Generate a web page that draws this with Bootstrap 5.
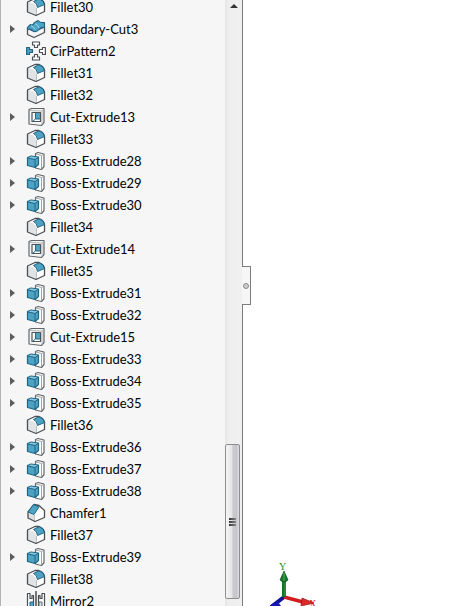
<!DOCTYPE html>
<html lang="en">
<head>
<meta charset="utf-8">
<meta name="viewport" content="width=device-width, initial-scale=1">
<title>Feature tree</title>
<link rel="stylesheet" href="https://cdn.jsdelivr.net/npm/bootstrap@5.3.0/dist/css/bootstrap.min.css">
<style>
body { font: 13px/22px Lato, "Noto Sans", sans-serif; color: #000; }
.feature-panel { flex: 0 0 243px; background: #f6f6f6; border-left: 1px solid #b4b4b4; border-right: 1px solid #7c7c7c; }
.feature-tree { margin-top: -4px; }
.feature { height: 22px; padding-left: 25px; gap: 4px; white-space: nowrap; }
.feature.has-children { padding-left: 0; }
.feature svg { width: 20px; height: 20px; flex: none; stroke-linejoin: round; }
.toggle { width: 21px; height: 22px; }
.toggle::before { content: ""; display: block; margin-left: 9px; width: 0; border: 4px solid transparent; border-left: 5px solid #5d5d5d; border-right: 0; }
.scroll-track { flex: 0 0 17px; background: linear-gradient(90deg, #e5e5e5, #eee 20%, #f0f0f0); }
.scroll-up { height: 12px; }
.scroll-up::before { content: ""; display: block; margin: 0 auto; width: 0; border: 4px solid transparent; border-bottom: 4px solid #333; border-top: 0; }
.scroll-thumb { height: 155px; margin: 0 2px 7px 0; row-gap: 1px; border: 1px solid #8d8d8d; border-radius: 2px; background: linear-gradient(90deg, #f6f6f6, #e6e6e8 42%, #cacacf 55%, #c5c5cc 80%, #dddde1); }
.grip { width: 7px; height: 2px; background: linear-gradient(90deg, #333, #888); }
.panel-handle { left: 100%; top: 266px; width: 9px; height: 39px; background: #f6f6f6; border: 1px solid #7c7c7c; border-left: 0; }
.panel-handle::before { content: ""; width: 6px; height: 6px; margin-right: 1px; border: 1px solid #8b8b8b; border-radius: 50%; background: #ccc; }
.triad { left: 25px; bottom: 0; }
.triad text { font: 10px "Liberation Serif", serif; }
</style>
<script src="https://cdn.jsdelivr.net/npm/bootstrap@5.3.0/dist/js/bootstrap.bundle.min.js"></script>
</head>
<body>
<svg class="d-none" aria-hidden="true">
  <symbol id="fillet" viewBox="0 0 20 20">
    <path d="M1.500 5 9 1.500H13Q17.500 3 18.500 7V14.500L10 18.500 1.500 15Z" fill="#fff"/>
    <path d="M1.500 5 7 6Q10 8 10.500 11L10 18.500 1.500 15Z" fill="#e1e3e4"/>
    <path d="M10.500 11V18" stroke="#babdbf" fill="none"/>
    <path d="M9 1.500H13Q17.500 3 18.500 7V14.500L10 18.500 1.500 15V5Z" fill="none" stroke="#4b4f52" stroke-width="1.300"/>
    <path d="M7.500 4.500 13 1.800Q17.500 3 18.500 7.500L11.500 10.500Q11 6 7.500 4.500Z" fill="#4ea3c5" stroke="#1e6685"/>
  </symbol>
  <symbol id="chamfer" viewBox="0 0 20 20">
    <path d="M2 9 8 1.500 13 2.500 18.500 7.500V14.500L9 18.500 2 15Z" fill="#fff"/>
    <path d="M2 9.500 8 12 9 18.500 2 15Z" fill="#dfe2e4"/>
    <path d="M8.500 12V18" fill="none" stroke="#c1c4c6"/>
    <path d="M8 1.500 13 2.500 18.500 7.500V14.500L9 18.500 2 15V9Z" fill="none" stroke="#4b4f52" stroke-width="1.300"/>
    <path d="M2 9 7.500 1.500 13 4 8 11.500Z" fill="#4ea3c5" stroke="#1e6685"/>
  </symbol>
  <symbol id="boundary" viewBox="0 0 20 20">
    <path d="M1.500 9.500 8 12.500 18.500 8V13.500L8 18.500 1.500 15.500Z" fill="#f4f4f4" stroke="#4b4f52" stroke-width="1.300"/>
    <path d="M1.500 8.500 4.500 5.500Q7 7 8 4L12 1.500Q14 4 18.500 3.500V8.500Q15 8 13 10.500T8 12.500Q5 9 1.500 10.500Z" fill="#4ea3c5" stroke="#1e6685" stroke-width="1.100"/>
    <path d="M5 6.500Q8 8 9 10.500M9 4.500Q12 6 13 9" fill="none" stroke="#a7d8e8"/>
  </symbol>
  <symbol id="pattern" viewBox="0 0 20 20">
    <path d="M6.500 1H13.500V4H11.500V6.500H8.500V4H6.500ZM6.500 19H13.500V16H11.500V13.500H8.500V16H6.500ZM19.400 6.500V13.500H16.500V11.500H13.500V8.500H16.500V6.500Z" fill="#fff" stroke="#4b4f52" stroke-width="1.200"/>
    <path d="M.6 6.500V13.500H3.500V11.500H6.500V8.500H3.500V6.500Z" fill="#4ea3c5" stroke="#1e6685" stroke-width="1.200"/>
  </symbol>
  <symbol id="cut" viewBox="0 0 20 20">
    <path d="M3 2.500 5.500 1.500H18V15.500L15.500 18.500 3 17Z" fill="#f5f5f5" stroke="#63676a" stroke-width="1.200"/>
    <path d="M16 4V17.500M4 3.500 16 4 17.500 2" fill="none" stroke="#b5b8ba"/>
    <path d="M6 5.500H14.500V14.500H6Z" fill="#fff" stroke="#505457" stroke-width="1.200"/>
    <path d="M9.500 6H14V12H9.500Z" fill="#4ea3c5"/>
    <path d="M9.500 6V12L6.500 14.500M9.500 12H14" fill="none" stroke="#1e6685"/>
  </symbol>
  <symbol id="boss" viewBox="0 0 20 20">
    <path d="M9.500 2.500 12 1.500 18 3V15.500L15.500 18.500 9.500 17Z" fill="#fff" stroke="#63676a" stroke-width="1.200"/>
    <path d="M10 3 15.500 4.500V18M15.500 4.500 18 3" fill="none" stroke="#a0a3a5"/>
    <path d="M1.500 6.500 5 5 12.500 6V13.500L9 16.500 1.500 14.500Z" fill="#4ea3c5" stroke="#1e6685" stroke-width="1.200"/>
    <path d="M2 6.500 5 5.500 12 6.500 9 8.500Z" fill="#86c5dd"/>
    <path d="M2 7 9 8.500V16M9 8.500 12 6.500" fill="none" stroke="#1e6685"/>
  </symbol>
  <symbol id="mirror" viewBox="0 0 20 20">
    <path d="M10 0V20" stroke="#333" stroke-width="1.300"/>
    <path d="M1.500 2.500H4V7.500H6V4.500H7.500V17.500H1.500ZM18.500 2.500H16V7.500H14V4.500H12.500V17.500H18.500Z" fill="#fff" stroke="#4b4f52" stroke-width="1.200"/>
    <path d="M4 11H7.500V17H4Z" fill="#4ea3c5" stroke="#1e6685"/>
    <path d="M13 11H16V17H13Z" fill="#ddd" stroke="#63676a"/>
  </symbol>
</svg>
<div class="d-flex vh-100 overflow-hidden bg-white">
  <aside class="feature-panel d-flex position-relative" aria-label="Features">
    <div class="flex-grow-1 overflow-hidden">
      <ul class="feature-tree list-unstyled mb-0">
        <li class="feature d-flex align-items-center"><svg><use href="#fillet"/></svg><span>Fillet30</span></li>
        <li class="feature has-children d-flex align-items-center"><button class="toggle border-0 bg-transparent p-0" type="button" aria-label="Expand Boundary-Cut3"></button><svg><use href="#boundary"/></svg><span>Boundary-Cut3</span></li>
        <li class="feature d-flex align-items-center"><svg><use href="#pattern"/></svg><span>CirPattern2</span></li>
        <li class="feature d-flex align-items-center"><svg><use href="#fillet"/></svg><span>Fillet31</span></li>
        <li class="feature d-flex align-items-center"><svg><use href="#fillet"/></svg><span>Fillet32</span></li>
        <li class="feature has-children d-flex align-items-center"><button class="toggle border-0 bg-transparent p-0" type="button" aria-label="Expand Cut-Extrude13"></button><svg><use href="#cut"/></svg><span>Cut-Extrude13</span></li>
        <li class="feature d-flex align-items-center"><svg><use href="#fillet"/></svg><span>Fillet33</span></li>
        <li class="feature has-children d-flex align-items-center"><button class="toggle border-0 bg-transparent p-0" type="button" aria-label="Expand Boss-Extrude28"></button><svg><use href="#boss"/></svg><span>Boss-Extrude28</span></li>
        <li class="feature has-children d-flex align-items-center"><button class="toggle border-0 bg-transparent p-0" type="button" aria-label="Expand Boss-Extrude29"></button><svg><use href="#boss"/></svg><span>Boss-Extrude29</span></li>
        <li class="feature has-children d-flex align-items-center"><button class="toggle border-0 bg-transparent p-0" type="button" aria-label="Expand Boss-Extrude30"></button><svg><use href="#boss"/></svg><span>Boss-Extrude30</span></li>
        <li class="feature d-flex align-items-center"><svg><use href="#fillet"/></svg><span>Fillet34</span></li>
        <li class="feature has-children d-flex align-items-center"><button class="toggle border-0 bg-transparent p-0" type="button" aria-label="Expand Cut-Extrude14"></button><svg><use href="#cut"/></svg><span>Cut-Extrude14</span></li>
        <li class="feature d-flex align-items-center"><svg><use href="#fillet"/></svg><span>Fillet35</span></li>
        <li class="feature has-children d-flex align-items-center"><button class="toggle border-0 bg-transparent p-0" type="button" aria-label="Expand Boss-Extrude31"></button><svg><use href="#boss"/></svg><span>Boss-Extrude31</span></li>
        <li class="feature has-children d-flex align-items-center"><button class="toggle border-0 bg-transparent p-0" type="button" aria-label="Expand Boss-Extrude32"></button><svg><use href="#boss"/></svg><span>Boss-Extrude32</span></li>
        <li class="feature has-children d-flex align-items-center"><button class="toggle border-0 bg-transparent p-0" type="button" aria-label="Expand Cut-Extrude15"></button><svg><use href="#cut"/></svg><span>Cut-Extrude15</span></li>
        <li class="feature has-children d-flex align-items-center"><button class="toggle border-0 bg-transparent p-0" type="button" aria-label="Expand Boss-Extrude33"></button><svg><use href="#boss"/></svg><span>Boss-Extrude33</span></li>
        <li class="feature has-children d-flex align-items-center"><button class="toggle border-0 bg-transparent p-0" type="button" aria-label="Expand Boss-Extrude34"></button><svg><use href="#boss"/></svg><span>Boss-Extrude34</span></li>
        <li class="feature has-children d-flex align-items-center"><button class="toggle border-0 bg-transparent p-0" type="button" aria-label="Expand Boss-Extrude35"></button><svg><use href="#boss"/></svg><span>Boss-Extrude35</span></li>
        <li class="feature d-flex align-items-center"><svg><use href="#fillet"/></svg><span>Fillet36</span></li>
        <li class="feature has-children d-flex align-items-center"><button class="toggle border-0 bg-transparent p-0" type="button" aria-label="Expand Boss-Extrude36"></button><svg><use href="#boss"/></svg><span>Boss-Extrude36</span></li>
        <li class="feature has-children d-flex align-items-center"><button class="toggle border-0 bg-transparent p-0" type="button" aria-label="Expand Boss-Extrude37"></button><svg><use href="#boss"/></svg><span>Boss-Extrude37</span></li>
        <li class="feature has-children d-flex align-items-center"><button class="toggle border-0 bg-transparent p-0" type="button" aria-label="Expand Boss-Extrude38"></button><svg><use href="#boss"/></svg><span>Boss-Extrude38</span></li>
        <li class="feature d-flex align-items-center"><svg><use href="#chamfer"/></svg><span>Chamfer1</span></li>
        <li class="feature d-flex align-items-center"><svg><use href="#fillet"/></svg><span>Fillet37</span></li>
        <li class="feature has-children d-flex align-items-center"><button class="toggle border-0 bg-transparent p-0" type="button" aria-label="Expand Boss-Extrude39"></button><svg><use href="#boss"/></svg><span>Boss-Extrude39</span></li>
        <li class="feature d-flex align-items-center"><svg><use href="#fillet"/></svg><span>Fillet38</span></li>
        <li class="feature d-flex align-items-center"><svg><use href="#mirror"/></svg><span>Mirror2</span></li>
      </ul>
    </div>
    <div class="scroll-track d-flex flex-column justify-content-between">
      <button class="scroll-up border-0 bg-transparent p-0" type="button" aria-label="Scroll up"></button>
      <div class="scroll-thumb d-flex flex-column align-items-center justify-content-center">
        <span class="grip"></span><span class="grip"></span><span class="grip"></span>
      </div>
    </div>
    <button class="panel-handle position-absolute d-flex align-items-center justify-content-center p-0" type="button" aria-label="Collapse panel"></button>
  </aside>
  <main class="flex-grow-1 position-relative">
    <svg class="triad position-absolute" width="56" height="50" viewBox="268 556 56 50" role="img" aria-label="Axes">
      <path d="M284 597 271 607" stroke="#11119c" stroke-width="4"/>
      <path d="M272 604 278 602 281 606H270Z" fill="#1717b5"/>
      <path d="M284 597 303 602" stroke="#d51c1c" stroke-width="3.500"/>
      <path d="M302 598 314 603 301 606Z" fill="#dc2929" stroke="#961313" stroke-width=".7"/>
      <path d="M284 597V579" stroke="#17752b" stroke-width="4"/>
      <path d="M285 596V579" stroke="#399c49"/>
      <path d="M284 571 288 580Q284 584 280 580Z" fill="#17752b" stroke="#0b581b" stroke-width=".7"/>
      <path d="M284 573V581" stroke="#55af60"/>
      <text x="279" y="570" fill="#189018">Y</text>
      <text x="309" y="607" fill="#df1616">X</text>
    </svg>
  </main>
</div>
</body>
</html>
